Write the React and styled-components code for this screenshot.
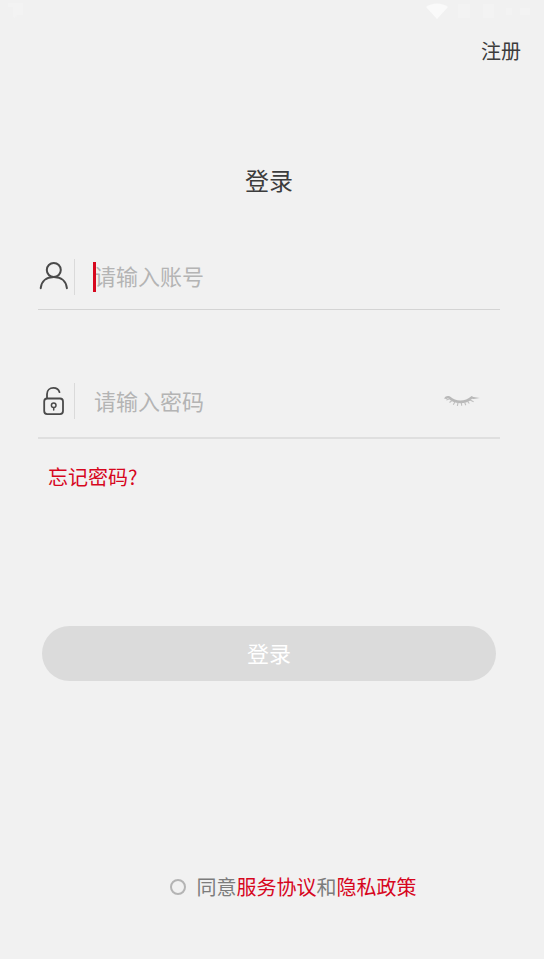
import React, { useState } from 'react';
import styled, { createGlobalStyle } from 'styled-components';

const GlobalStyle = createGlobalStyle`
  *, *::before, *::after { box-sizing: border-box; }
  body {
    margin: 0;
    background: #f1f1f1;
    color: #3c3c3c;
    font-family: "Noto Sans CJK SC", "Noto Sans", sans-serif;
  }
  input, button { font: inherit; }
`;

const Page = styled.div`
  display: flex;
  flex-direction: column;
  min-height: 100vh;
  background: #f1f1f1;
`;

const StatusBar = styled.div`
  display: flex;
  align-items: center;
  justify-content: space-between;
  height: 24px;
  padding: 0 14px 2px 8px;
`;

const StatusIcons = styled.div`
  display: flex;
  align-items: center;
  gap: 10px;
`;

const Header = styled.header`
  display: flex;
  align-items: center;
  justify-content: flex-end;
  height: 54px;
  padding: 0 23px;
`;

const TextLink = styled.a`
  color: ${({ $tone }) => ($tone === 'dark' ? '#3c3c3c' : '#d7071e')};
  font-size: 20px;
  line-height: 28px;
  text-decoration: none;
`;

const Form = styled.form`
  display: flex;
  flex-direction: column;
  padding: 0 44px 0 38px;
`;

const Title = styled.h1`
  margin: 84px 0 0;
  font-size: 24px;
  font-weight: 400;
  line-height: 36px;
  text-align: center;
`;

const Field = styled.div`
  display: flex;
  align-items: center;
  height: ${({ $tall }) => ($tall ? 74 : 66)}px;
  margin-top: ${({ $tall }) => ($tall ? 55 : 46)}px;
  border-bottom: ${({ $tall }) => ($tall ? 2 : 1)}px solid ${({ $tall }) => ($tall ? '#dfdfdf' : '#d4d4d4')};
`;

const FieldLabel = styled.label`
  display: flex;
  align-items: center;
  width: 37px;
  height: 36px;
  border-right: 1px solid #dadada;
`;

const InputWrap = styled.div`
  position: relative;
  flex: 1;
  min-width: 0;
  margin-left: 19px;
`;

const Input = styled.input`
  display: block;
  width: 100%;
  height: 32px;
  padding: 0 0 3px;
  border: 0;
  outline: 0;
  background: transparent;
  color: #3c3c3c;
  font-size: 22px;
  line-height: 28px;
  caret-color: #d7071e;

  &::placeholder { color: #b4b4b4; opacity: 1; }
`;

const Caret = styled.span`
  position: absolute;
  top: 1px;
  left: -1px;
  width: 3px;
  height: 30px;
  background: #d7071e;
`;

const IconButton = styled.button`
  display: flex;
  margin-right: 20px;
  padding: 0;
  border: 0;
  background: transparent;
  cursor: pointer;
`;

const ForgotRow = styled.div`
  display: flex;
  margin-top: 24px;
  padding-left: 10px;
`;

const SubmitButton = styled.button`
  height: 55px;
  margin: 135px 4px 0;
  padding: 0 0 3px;
  border: 0;
  border-radius: 28px;
  background: #dbdbdb;
  color: #fff;
  font-size: 22px;
  line-height: 32px;
  cursor: pointer;
`;

const Agreement = styled.div`
  display: flex;
  align-items: center;
  justify-content: center;
  gap: 11px;
  margin-top: 192px;
  padding-left: 42px;
  white-space: nowrap;
`;

const Radio = styled.input`
  appearance: none;
  flex: none;
  width: 16px;
  height: 16px;
  margin: 0;
  border: 2px solid #b4b4b4;
  border-radius: 50%;

  &:checked { background: #d7071e; }
`;

const AgreementText = styled.label`
  color: #7c7c7c;
  font-size: 20px;
  line-height: 28px;
`;

function UserIcon() {
  return (
    <svg width="31" height="30" viewBox="0 0 31 30" fill="none" stroke="#4a4a4a" strokeWidth="2" strokeLinecap="round" aria-hidden="true">
      <circle cx="15.8" cy="8" r="7" />
      <path d="M2.7 26.2C3.4 19.2 8.5 15 15.8 15S28.2 19.2 28.9 26.2" />
    </svg>
  );
}

function LockIcon() {
  return (
    <svg width="31" height="30" viewBox="0 0 31 30" fill="none" stroke="#4a4a4a" strokeWidth="1.8" strokeLinecap="round" aria-hidden="true">
      <rect x="6.2" y="12.5" width="18.8" height="15.6" rx="3" />
      <path d="M9 12V8.2C9 4.4 11.7 1.9 15.4 1.9c3 0 5.3 1.6 6.1 4.3" />
      <circle cx="15.7" cy="19.2" r="2.3" strokeWidth="1.5" />
      <path d="M15.7 21.7v2.4" strokeWidth="1.5" />
    </svg>
  );
}

function ClosedEyeIcon() {
  return (
    <svg width="36" height="14" viewBox="0 0 36 14" fill="none" aria-hidden="true">
      <path d="M0 4.5C1.4 2.3 3.6 1.5 6 2.5c3.2 2.7 6.5 4 10.2 4 4.2 0 7.9-1.5 11.4-4.5L29.4 3l6.4 1.1-6.3.9-1.5-.2-1.8 1.7C23.4 8.3 20 9.3 16.2 9.2 10.7 9.1 6.7 7 4.2 4.2L2.4 4.9z" fill="#b9b9b9" />
      <path d="M5.2 5 2.4 6M8 6.6 5.5 8.5M10.8 8l-1.5 2.8M14 8.7l-.6 3.2M17.4 8.8l.3 3M20.6 8.2l1.2 3.1M23.3 7.2l2 2.3M25.6 5.8l4 2" stroke="#bfbfbf" strokeWidth="1.1" />
    </svg>
  );
}

function NoticeIcon() {
  return (
    <svg width="15" height="16" viewBox="0 0 15 16" aria-hidden="true">
      <path d="M0 0h15v12H9l-2 3-2-1V4H0z" fill="#f3f3f3" />
    </svg>
  );
}

function SignalIcons() {
  return (
    <StatusIcons aria-hidden="true">
      <svg width="22" height="18" viewBox="0 0 22 18">
        <path d="M0 5C6 .2 16 .2 22 5L11 17z" fill="#fafafa" />
      </svg>
      <svg width="72" height="16" viewBox="0 0 72 16" fill="#f3f3f3">
        <path d="M0 1h12v14H0zM25 1h11v14H25zM48 5h6v7h-6zM62 5h10v7H62z" />
      </svg>
    </StatusIcons>
  );
}

export default function App() {
  const [account, setAccount] = useState('');
  const [password, setPassword] = useState('');
  const [visible, setVisible] = useState(false);

  return (
    <Page>
      <GlobalStyle />
      <StatusBar>
        <NoticeIcon />
        <SignalIcons />
      </StatusBar>
      <Header>
        <TextLink href="#register" $tone="dark">注册</TextLink>
      </Header>
      <Form onSubmit={(event) => event.preventDefault()}>
        <Title>登录</Title>
        <Field>
          <FieldLabel htmlFor="account" aria-label="账号"><UserIcon /></FieldLabel>
          <InputWrap>
            {account === '' && <Caret />}
            <Input
              id="account"
              type="text"
              placeholder="请输入账号"
              value={account}
              onChange={(event) => setAccount(event.target.value)}
            />
          </InputWrap>
        </Field>
        <Field $tall>
          <FieldLabel htmlFor="password" aria-label="密码"><LockIcon /></FieldLabel>
          <InputWrap>
            <Input
              id="password"
              type={visible ? 'text' : 'password'}
              placeholder="请输入密码"
              value={password}
              onChange={(event) => setPassword(event.target.value)}
            />
          </InputWrap>
          <IconButton type="button" aria-label="显示密码" onClick={() => setVisible(!visible)}>
            <ClosedEyeIcon />
          </IconButton>
        </Field>
        <ForgotRow>
          <TextLink href="#forgot">忘记密码?</TextLink>
        </ForgotRow>
        <SubmitButton type="submit">登录</SubmitButton>
      </Form>
      <Agreement>
        <Radio id="agree" type="radio" name="agree" />
        <AgreementText htmlFor="agree">
          同意<TextLink href="#terms">服务协议</TextLink>和<TextLink href="#privacy">隐私政策</TextLink>
        </AgreementText>
      </Agreement>
    </Page>
  );
}
